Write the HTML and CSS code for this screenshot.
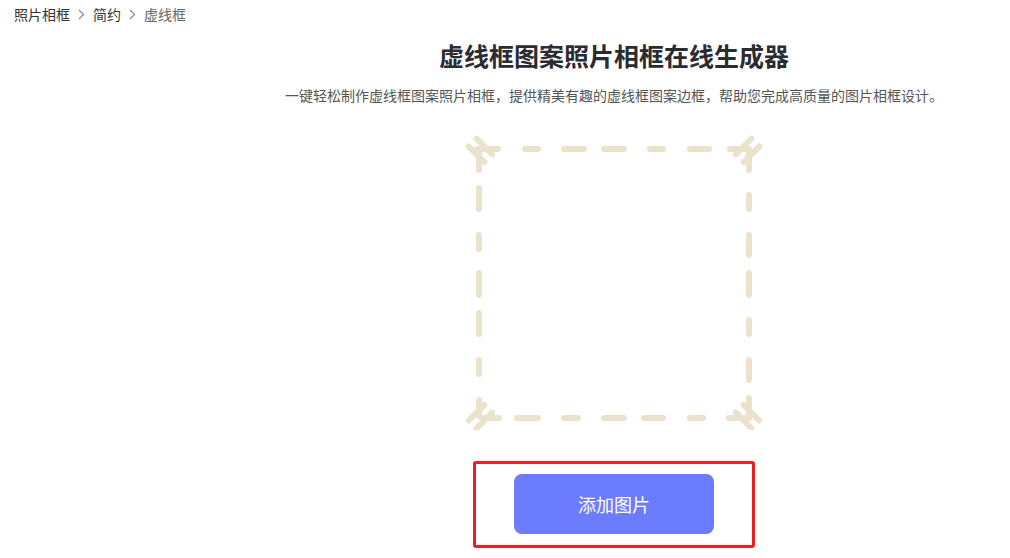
FILE: index.html
```html
<!DOCTYPE html>
<html lang="zh-CN">
  <head>
    <meta charset="UTF-8" />
    <meta name="viewport" content="width=device-width, initial-scale=1.0" />
    <title>虚线框图案照片相框在线生成器</title>
    <link rel="stylesheet" href="styles.css">
  </head>

  <body>
    <nav class="crumbs">
      <a href="#">照片相框</a>
      <svg class="sep" width="7" height="11" viewBox="0 0 7 11"><path d="M1 1 L5.5 5.5 L1 10" /></svg>
      <a href="#">简约</a>
      <svg class="sep" width="7" height="11" viewBox="0 0 7 11"><path d="M1 1 L5.5 5.5 L1 10" /></svg>
      <span class="current">虚线框</span>
    </nav>

    <main class="content">
      <h1>虚线框图案照片相框在线生成器</h1>
      <p class="intro">
        一键轻松制作虚线框图案照片相框，提供精美有趣的虚线框图案边框，帮助您完成高质量的图片相框设计。
      </p>

      <!-- frame preview -->
      <svg class="preview" width="310" height="300" viewBox="460 130 310 300">
        <g fill="none" stroke="#eae2ca" stroke-width="6" stroke-linecap="round">
          <!-- corners -->
          <path d="M478 149 L499 149 M480 152 L480 170" />
          <path d="M477.5 138.7 L493.1 154.3 M469.7 146.5 L485.3 162.1" />
          <path d="M731 149 L750 149 M750 152 L750 170" />
          <path d="M760.3 146.5 L744.7 162.1 M752.5 138.7 L736.9 154.3" />
          <path d="M483 418 L500 418 M480 400 L480 416" />
          <path d="M477.5 428.3 L493.1 412.7 M469.7 420.5 L485.3 404.9" />
          <path d="M730 418 L750 418 M750 398 L750 416" />
          <path d="M744.7 404.9 L760.3 420.5 M736.9 412.7 L752.5 428.3" />
          <!-- top -->
          <path d="M526 149 L539 149 M565 149 L585 149 M605 149 L625 149 M651 149 L664 149 M691 149 L710 149" />
          <!-- bottom -->
          <path d="M518 418 L539 418 M565 418 L579 418 M605 418 L625 418 M645 418 L664 418 M691 418 L704 418" />
          <!-- left -->
          <path d="M480 188 L480 209 M480 235 L480 249 M480 273 L480 295 M480 313 L480 334 M480 360 L480 374" />
          <!-- right -->
          <path d="M750 195 L750 209 M750 235 L750 255 M750 273 L750 295 M750 320 L750 334 M750 360 L750 380" />
        </g>
      </svg>

      <div class="upload">
        <button class="add-btn">添加图片</button>
      </div>
    </main>
  </body>
</html>
```

FILE: styles.css
```css
body {
  margin: 0;
  font-family: "Noto Sans CJK SC", "Noto Sans", sans-serif;
  background: #fff;
  color: #333;
}

/* Breadcrumb */
.crumbs {
  display: flex;
  align-items: center;
  gap: 8px;
  height: 28px;
  padding-left: 14px;
  font-size: 14px;
}

.crumbs a {
  color: #333;
  text-decoration: none;
}

.crumbs .sep {
  fill: none;
  stroke: #888;
  stroke-width: 1.2;
}

.crumbs .current {
  color: #666;
}

/* Main */
.content {
  margin-left: 218px;
  display: flex;
  flex-direction: column;
  align-items: center;
}

.content h1 {
  margin: 10px 0 0;
  font-size: 25px;
  line-height: 34px;
  font-weight: 700;
  color: #2b2b33;
}

.intro {
  margin: 12px 0 0;
  font-size: 14px;
  line-height: 22px;
  color: #555;
}

.preview {
  display: block;
  margin-top: 24px;
}

/* Upload */
.upload {
  margin-top: 31px;
  padding: 10px 38px 11px;
  border: 3px solid #f01e1e;
  border-radius: 3px;
}

.add-btn {
  display: block;
  width: 200px;
  height: 60px;
  border: none;
  border-radius: 8px;
  background: #6b7cff;
  color: #fff;
  font-family: inherit;
  font-size: 18px;
  cursor: pointer;
}
```
